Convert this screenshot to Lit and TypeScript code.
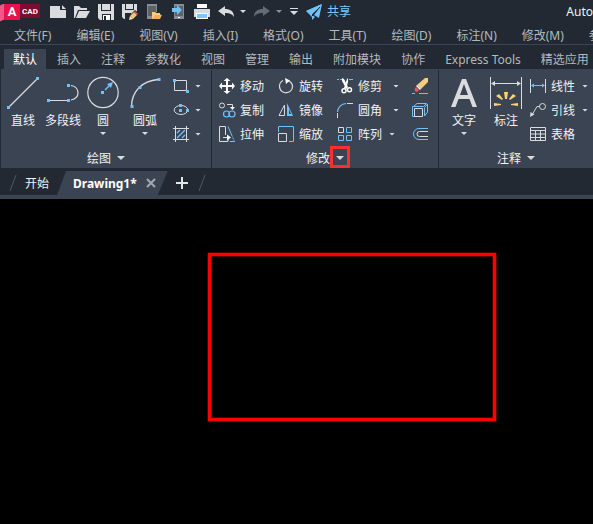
import { LitElement, html, css, svg, nothing, TemplateResult, SVGTemplateResult } from "lit";
import { customElement, property, state } from "lit/decorators.js";
import { classMap } from "lit/directives/class-map.js";

const G = "#d9dbde";
const B = "#70c0f9";
const W = "#ffffff";
const Y = "#f7cf7c";

const dot = (x: number, y: number, s = 3) =>
  svg`<rect x=${x - s / 2} y=${y - s / 2} width=${s} height=${s} fill=${B}/>`;

/* 16 x 16 glyphs */
const small: Record<string, SVGTemplateResult> = {
  new: svg`<path d="M0 2H10V6H16V14H0Z M12 1L16 5H12Z" fill=${G}/>`,
  open: svg`<path d="M0 14V2H5L7 4H13V6H4L1 14Z M5 7H16L12 14H2Z" fill=${G}/>`,
  save: svg`<path d="M0 0H16V16H2L0 14Z" fill=${G}/><path d="M3 0H13V7H3Z" fill="#222933"/><path d="M4 0H12V6H4Z" fill=${G}/><path d="M4 10H13V16H4Z" fill="#222933"/><path d="M5 11H12V16H5Z" fill=${W}/><path d="M6 12H8V16H6Z" fill="#222933"/>`,
  saveAs: svg`<path d="M0 0H15V8L8 15H2L0 13Z" fill=${G}/><path d="M3 0H12V6H3Z" fill="#222933"/><path d="M4 0H11V5H4Z" fill=${G}/><path d="M3 9H9V15H3Z" fill="#222933"/><path d="M6 17L7 12L13 6L18 10L11 16Z" fill="#222933"/><path d="M8 12L12 8L15 11L11 15Z" fill="#fcc468"/><path d="M12 8L13 7L16 10L15 11Z" fill="#f0524f"/><path d="M8 12L11 15L7 16Z" fill="#f5e3c2"/>`,
  openMobile: svg`<path d="M1 0H11V8H6V15H1Z" fill="#888c92"/><path d="M2 2H10V12H2Z" fill="#5d6269"/><path d="M6 15V8H9L10 9H14V10L15 11L13 15Z" fill=${Y}/><path d="M7 14L9 11H16L14 15H6Z" fill="#eeb552"/>`,
  saveMobile: svg`<path d="M4 0H14V15H4Z" fill="#888c92"/><path d="M5 2H13V12H5Z" fill="#5d6269"/><path d="M8 13H10V14H8Z" fill=${W}/><path d="M2 4H7V1L12 6L7 11V8H2Z" fill=${B}/>`,
  print: svg`<path d="M3 0H13V4H3Z" fill=${W}/><path d="M0 5H16V13H13V9H3V13H0Z" fill=${G}/><path d="M2 9H14V15H2Z" fill=${W}/><path d="M3 10H13V14H3Z" fill="#7cc6fb"/>`,
  undo: svg`<path d="M0 7L7 2V5C12 5 16 7 16 13C14 10 12 9 7 9V12Z" fill=${G}/>`,
  redo: svg`<path d="M16 7L9 2V5C4 5 0 7 0 13C2 10 4 9 9 9V12Z" fill="#656b74"/>`,
  plane: svg`<path d="M0 7L16 0L13 14L8 11L13 4L6 10Z M6 11L9 13L6 16Z" fill=${B}/><path d="M16 0L6 10V13L0 7Z" fill=${B}/><path d="M6 12L14 3" stroke="#222933"/>`,
  rect: svg`<path d="M1 2.500H13.500V12.500H1.500V3" fill="none" stroke=${G}/>${dot(1.5, 2.5)}${dot(14.5, 13.5)}`,
  ellipse: svg`<ellipse cx="8" cy="8" rx="6.800" ry="4.500" fill="none" stroke=${G}/>${dot(7.5, 3.5)}${dot(7.5, 8.5)}${dot(14.5, 8.5)}`,
  hatch: svg`<path d="M0 2.500H16M0 13.500H16M2.500 0V16M13.500 0V16" stroke=${G}/><path d="M4 7L7 4M4 12L12 4M9 12L12 9" stroke=${B} stroke-width="1.400"/>`,
  move: svg`<path d="M7 3H4.500L8 0L11.500 3H9V7H13V4.500L16 8L13 11.500V9H9V13H11.500L8 16L4.500 13H7V9H3V11.500L0 8L3 4.500V7H7Z" fill=${W}/>`,
  rotate: svg`<path d="M5 2.500A6.500 6.500 0 1 0 14.500 8.500C14.500 6 13 4 10 2.500" fill="none" stroke=${G} stroke-width="1.300"/><path d="M7 0L12 2.500L8 6Z" fill=${W}/>`,
  copy: svg`<circle cx="3" cy="3.500" r="2.500" fill="none" stroke=${G}/><path d="M8 2.500H13.500V5" fill="none" stroke=${G}/><path d="M11 5H16L13.500 8Z" fill=${W}/><circle cx="7.500" cy="12" r="3" fill="none" stroke=${B} stroke-width="1.200"/><circle cx="13" cy="12" r="3" fill="none" stroke=${B} stroke-width="1.200"/>`,
  mirror: svg`<path d="M1 13.500H6.500V3Z" fill="none" stroke=${G}/><path d="M9 1V14H15Z" fill=${B}/><path d="M11 7V12H13Z" fill="#3b4453"/>`,
  stretch: svg`<path d="M.500 .500H6.500L6.500 9M9 13V15.500H.500V.500" fill="none" stroke=${G}/><path d="M4 11.500H9" stroke=${G}/><path d="M8 8.500L12 11.500L8 14.500Z" fill=${W}/><path d="M9 .500L15.500 15.500H9" fill="none" stroke=${B} stroke-dasharray="11 1 2 1 6"/>`,
  scale: svg`<path d="M.500 6V.500H15.500V15.500H11" fill="none" stroke=${B}/><path d="M.500 7.500H8.500V15.500H.500Z" fill="none" stroke=${G}/>`,
  trim: svg`<path d="M0 1.500H2M3 1.500H5M12 1.500H16" stroke=${B}/><path d="M5 0L7 1L11 9L9.500 11L5 3Z" fill=${W}/><path d="M11 0V4L9 11L7 10L10 1Z" fill=${W}/><circle cx="7" cy="12.800" r="2" fill="none" stroke=${W} stroke-width="1.500"/><circle cx="12.500" cy="11.800" r="2" fill="none" stroke=${W} stroke-width="1.500"/>`,
  fillet: svg`<path d="M.500 10A9 9 0 0 1 9 1.500" fill="none" stroke=${B} stroke-width="1.200"/><path d="M10 1.500H16M.500 11V16" stroke=${G}/>`,
  array: svg`<path d="M1.500 1.500H6.500V6.500H1.500Z" fill="none" stroke=${G}/><path d="M9.500 1.500H14.500V6.500H9.500Z M9.500 9.500H14.500V14.500H9.500Z M1.500 9.500H6.500V14.500H1.500Z" fill="none" stroke=${B}/>`,
  erase: svg`<path d="M0 15.500H3M7 15.500H16" stroke=${B}/><path d="M13 0H16V4L9 11L5 7Z" fill=${Y}/><path d="M5 7L9 11L8 12L4 8Z" fill=${W}/><path d="M4 9L7 12C6 14 4 14.500 3 13C2 11.500 3 10 4 9Z" fill="#ef5350"/>`,
  solid: svg`<path d="M11.500 4.500H.500V14.500H3M2 4L5 1.500H14.500L11.500 4.500M12.500 14L15.500 10V2L12.500 5.500V14" fill="none" stroke=${B}/><path d="M2.500 6.500H10.500V14.500H2.500Z" fill="none" stroke=${G}/>`,
  offset: svg`<path d="M16 2.500H7A5.500 5.500 0 0 0 7 13.500H16" fill="none" stroke=${B}/><path d="M16 5.500H7.500A2.500 2.500 0 0 0 7.500 10.500H16" fill="none" stroke=${G}/>`,
  linear: svg`<path d="M.500 1V15M15.500 1V15" stroke=${G}/><path d="M2 7.500H14" stroke=${B}/><path d="M1 7.500L4 5.500V9.500ZM15 7.500L12 5.500V9.500Z" fill=${B}/>`,
  leader: svg`<circle cx="12.500" cy="4.500" r="3" fill="none" stroke=${G}/><path d="M9.500 4.500H7L2 13" fill="none" stroke=${G}/><path d="M0 15L.500 10L4.500 12.500Z" fill=${G}/>`,
  table: svg`<path d="M.500 1.500H15.500V14.500H.500ZM.500 4.500H15.500M.500 8H15.500M.500 11.500H15.500M5.500 4.500V14.500M10.500 4.500V14.500" fill="none" stroke=${G}/>`,
};

/* 32 x 32 glyphs */
const large: Record<string, SVGTemplateResult> = {
  line: svg`<path d="M2.500 29.500L30 2" stroke=${G} stroke-width="1.200"/>${dot(1.5, 30.5)}${dot(30.5, 1.5)}`,
  polyline: svg`<path d="M2 23.500H20M24 23C28 22 31 20 31 16C31 12 28 9 24 8.500" fill="none" stroke=${G} stroke-width="1.200"/>${dot(1.5, 23.5)}${dot(21.5, 23.5)}${dot(21.5, 8.5)}`,
  circle: svg`<circle cx="16" cy="15.500" r="15.200" fill="none" stroke=${G} stroke-width="1.200"/>${dot(15.5, 15.5)}<path d="M18 13L23 8" stroke=${B} stroke-width="1.500"/><path d="M20 7L26 5L24 11Z" fill=${B}/>`,
  arc: svg`<path d="M2.500 29C3 14 13 4 29 2.500" fill="none" stroke=${G} stroke-width="1.300"/>${dot(3, 29.5)}${dot(11, 10.5)}${dot(30, 2.5)}`,
  text: svg`<path d="M3 30L14 2H18L29 30H24.500L21.500 22H10.500L7.500 30ZM12 18H20L16 7Z" fill=${G}/>`,
  dimension: svg`<path d="M.500 0V32M31.500 0V32" stroke=${G}/><path d="M2 6.500H30" stroke=${G}/><path d="M1 6.500L5 4V9ZM31 6.500L27 4V9Z" fill=${G}/><path d="M14 15H18L17 22H15ZM6 19L9 17L13 22L12 23ZM26 19L23 17L19 22L20 23ZM4 26L11 27V28L4 29ZM28 26L21 27V28L28 29Z" fill="#fdd07a"/>`,
};

const glyph = (name: string) =>
  html`<svg width="16" height="16" viewBox="0 0 16 16" overflow="visible" aria-hidden="true">${small[name]}</svg>`;
const bigGlyph = (name: string) =>
  html`<svg width="32" height="32" viewBox="0 0 32 32" overflow="visible" aria-hidden="true">${large[name]}</svg>`;

const base = css`
  * { box-sizing: border-box; }
  button {
    display: flex;
    align-items: center;
    margin: 0;
    padding: 0;
    border: 0;
    background: none;
    color: inherit;
    font: inherit;
    white-space: nowrap;
    cursor: default;
  }
  svg { display: block; flex: none; }
  .caret {
    width: 6px;
    height: 3px;
    flex: none;
    background: #d9dbde;
    clip-path: polygon(0 0, 100% 0, 50% 100%);
  }
  .caret.wide { width: 8px; height: 4px; }
`;

@customElement("quick-access-bar")
class QuickAccessBar extends LitElement {
  static styles = [base, css`
    :host {
      display: flex;
      align-items: center;
      gap: 8px;
      height: 23px;
      overflow: hidden;
    }
    .logo {
      display: flex;
      align-items: flex-start;
      height: 16px;
      margin-right: 2px;
      color: #fff;
      font-family: Roboto, sans-serif;
      font-weight: 700;
    }
    .fold {
      width: 4px;
      height: 18px;
      background: #f0578a;
      clip-path: polygon(0 2px, 100% 0, 100% 16px, 0 100%);
    }
    .mark {
      width: 16px;
      height: 16px;
      background: #e9124f;
      font-size: 13px;
      line-height: 16px;
      text-align: center;
    }
    .name {
      width: 20px;
      height: 14px;
      background: #7b0d30;
      font-size: 8px;
      line-height: 16px;
      text-align: center;
    }
    .split { display: flex; align-items: center; }
    .drop { width: 12px; height: 16px; justify-content: flex-end; }
    .dim .caret { background: #8d9198; }
    .more { flex-direction: column; gap: 2px; }
    .bar { width: 8px; height: 1px; background: #d9dbde; }
    .share { gap: 5px; color: #7cc6fb; }
    .title {
      margin-left: auto;
      color: #f2f3f4;
      white-space: nowrap;
    }
  `];

  render() {
    const tools: [string, string][] = [
      ["new", "新建"], ["open", "打开"], ["save", "保存"], ["saveAs", "另存为"],
      ["openMobile", "从移动设备打开"], ["saveMobile", "保存到移动设备"], ["print", "打印"],
    ];
    return html`
      <div class="logo"><span class="fold"></span><span class="mark">A</span><span class="name">CAD</span></div>
      ${tools.map(([icon, label]) => html`<button aria-label=${label}>${glyph(icon)}</button>`)}
      <div class="split">
        <button aria-label="放弃">${glyph("undo")}</button>
        <button class="drop" aria-label="放弃列表"><span class="caret"></span></button>
      </div>
      <div class="split dim">
        <button aria-label="重做">${glyph("redo")}</button>
        <button class="drop" aria-label="重做列表"><span class="caret"></span></button>
      </div>
      <button class="more" aria-label="自定义"><span class="bar"></span><span class="caret wide"></span></button>
      <button class="share">${glyph("plane")}共享</button>
      <span class="title">Auto</span>
    `;
  }
}

@customElement("ribbon-panel")
class RibbonPanel extends LitElement {
  @property() label = "";
  @property({ type: Boolean }) marked = false;

  static styles = [base, css`
    :host { display: flex; flex-direction: column; }
    .body { display: flex; height: 78px; padding: 4px 0 0 var(--inset, 0); }
    .title {
      position: relative;
      gap: 6px;
      height: 20px;
      margin: 0 auto;
    }
    .label { padding-top: 2px; }
    .marker {
      position: absolute;
      right: -6px;
      top: -2px;
      width: 20px;
      height: 22px;
      border: 3px solid #fb2f31;
    }
  `];

  render() {
    return html`
      <div class="body"><slot></slot></div>
      <button class="title">
        <span class="label">${this.label}</span><span class="caret wide"></span>
        ${this.marked ? html`<span class="marker"></span>` : nothing}
      </button>
    `;
  }
}

@customElement("app-root")
class AppRoot extends LitElement {
  @state() private tab = "默认";

  private menus = ["文件(F)", "编辑(E)", "视图(V)", "插入(I)", "格式(O)", "工具(T)", "绘图(D)", "标注(N)", "修改(M)", "参数(P)"];
  private tabs = ["默认", "插入", "注释", "参数化", "视图", "管理", "输出", "附加模块", "协作", "Express Tools", "精选应用"];

  static styles = [base, css`
    :host {
      display: flex;
      flex-direction: column;
      min-height: 100vh;
      overflow: hidden;
      background: #222933;
      color: #f1f2f3;
      font-family: "Noto Sans", "Noto Sans CJK SC", sans-serif;
      font-size: 12px;
      line-height: 16px;
    }
    .menus {
      display: flex;
      gap: 25px;
      height: 22px;
      padding: 4px 0 0 14px;
      border-bottom: 1px solid #3b4453;
      overflow: hidden;
      color: #b5b9be;
    }
    .tabs {
      display: flex;
      gap: 2px;
      height: 24px;
      padding: 4px 0 0 4px;
      overflow: hidden;
      color: #b5b9be;
    }
    .tab { padding: 2px 9px 0; }
    .tab.on { background: #3b4453; color: #fff; }
    .ribbon {
      display: flex;
      margin-left: 1px;
      padding-top: 1px;
      background: #3b4453;
      overflow: hidden;
    }
    .panel { flex: none; border-right: 1px solid #222933; }
    .draw { width: 211px; --inset: 2px; }
    .modify { width: 227px; --inset: 7px; }
    .notes { min-width: 154px; flex: 1 0 auto; border-right: 0; --inset: 5px; }
    .big {
      flex-direction: column;
      width: 40px;
      padding-top: 3px;
      gap: 3px;
    }
    .big.last { width: 44px; }
    .big .label { padding-top: 1px; }
    .rows { display: grid; grid-auto-rows: 24px; }
    .shapes { padding-left: 6px; }
    .commands { grid-template-columns: 59px 59px 75px 16px; }
    .notelist { padding-left: 2px; }
    .command { gap: 5px; }
    .command .label { padding-top: 2px; }
    .command .caret { margin-left: 6px; }
    .shapes .command .caret { margin-left: 1px; }
    .command.near .caret { margin-left: 2px; }
    .docs {
      display: flex;
      align-items: center;
      height: 31px;
      padding: 3px 0 0 9px;
      border-bottom: 4px solid #3b4453;
    }
    .start { padding: 2px 8px 0; }
    .doc {
      gap: 9px;
      height: 24px;
      padding: 0 12px 0 16px;
      background: #3b4453;
      clip-path: polygon(9px 0, 100% 0, calc(100% - 10px) 100%, 0 100%);
      color: #fff;
      font-weight: 700;
    }
    .doc .label { padding-top: 2px; }
    .add { padding: 0 10px 0 8px; }
    .canvas { flex: 1; background: #000; }
    .drawing { width: 100%; height: 325px; }
  `];

  private big(icon: string, label: string, caret = false, last = false): TemplateResult {
    return html`<button class=${classMap({ big: true, last })}>
      ${bigGlyph(icon)}<span class="label">${label}</span>${caret ? html`<span class="caret"></span>` : nothing}
    </button>`;
  }

  private command(icon: string, label: string, caret = false, near = false, name = label): TemplateResult {
    return html`<button class=${classMap({ command: true, near })} aria-label=${name}>
      ${glyph(icon)}${label ? html`<span class="label">${label}</span>` : nothing}${caret ? html`<span class="caret"></span>` : nothing}
    </button>`;
  }

  private slash() {
    return html`<svg width="8" height="16" viewBox="0 0 8 16" aria-hidden="true"><path d="M1 16L7 0" stroke="#4f5866"/></svg>`;
  }

  render() {
    return html`
      <quick-access-bar></quick-access-bar>
      <nav class="menus">${this.menus.map((m) => html`<button>${m}</button>`)}</nav>
      <div class="tabs" role="tablist">
        ${this.tabs.map((t) => html`<button role="tab" aria-selected=${t === this.tab}
          class=${classMap({ tab: true, on: t === this.tab })} @click=${() => (this.tab = t)}>${t}</button>`)}
      </div>
      <section class="ribbon">
        <ribbon-panel class="panel draw" label="绘图">
          ${this.big("line", "直线")}
          ${this.big("polyline", "多段线")}
          ${this.big("circle", "圆", true)}
          ${this.big("arc", "圆弧", true, true)}
          <div class="rows shapes">
            ${this.command("rect", "", true, false, "矩形")}
            ${this.command("ellipse", "", true, false, "椭圆")}
            ${this.command("hatch", "", true, false, "图案填充")}
          </div>
        </ribbon-panel>
        <ribbon-panel class="panel modify" label="修改" marked>
          <div class="rows commands">
            ${this.command("move", "移动")}
            ${this.command("rotate", "旋转")}
            ${this.command("trim", "修剪", true)}
            ${this.command("erase", "", false, false, "删除")}
            ${this.command("copy", "复制")}
            ${this.command("mirror", "镜像")}
            ${this.command("fillet", "圆角", true)}
            ${this.command("solid", "", false, false, "分解")}
            ${this.command("stretch", "拉伸")}
            ${this.command("scale", "缩放")}
            ${this.command("array", "阵列", true, true)}
            ${this.command("offset", "", false, false, "偏移")}
          </div>
        </ribbon-panel>
        <ribbon-panel class="panel notes" label="注释">
          ${this.big("text", "文字", true)}
          ${this.big("dimension", "标注", false, true)}
          <div class="rows notelist">
            ${this.command("linear", "线性", true, true)}
            ${this.command("leader", "引线", true, true)}
            ${this.command("table", "表格")}
          </div>
        </ribbon-panel>
      </section>
      <div class="docs">
        ${this.slash()}
        <button class="start">开始</button>
        <button class="doc"><span class="label">Drawing1*</span>
          <svg width="10" height="10" viewBox="0 0 10 10" aria-hidden="true"><path d="M1 1L9 9M9 1L1 9" stroke="#a4a9b1" stroke-width="2"/></svg>
        </button>
        <button class="add" aria-label="新图形">
          <svg width="12" height="12" viewBox="0 0 12 12" aria-hidden="true"><path d="M6 0V12M0 6H12" stroke="#e4e6e8" stroke-width="2"/></svg>
        </button>
        ${this.slash()}
      </div>
      <main class="canvas">
        <svg class="drawing" role="img" aria-label="矩形">
          <rect x="209.500" y="55.500" width="285" height="165" fill="none" stroke="#f00" stroke-width="3.600"/>
        </svg>
      </main>
    `;
  }
}
